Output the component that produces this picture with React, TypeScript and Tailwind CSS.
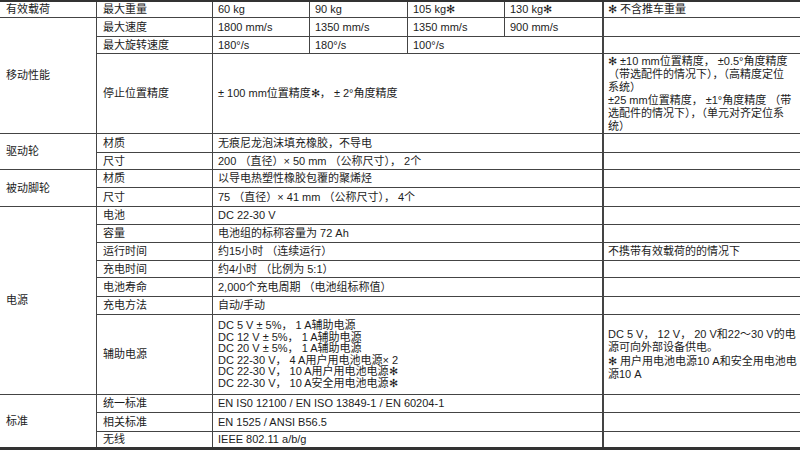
import React from "react";

const S = "✻";

type CellProps = {
  children?: React.ReactNode;
  className?: string;
};

function C({ children, className = "" }: CellProps) {
  return (
    <div className={`flex items-center px-[5px] border-[#444] overflow-visible whitespace-nowrap ${className}`}>
      {children}
    </div>
  );
}

function Lines({ lines, lh }: { lines: string[]; lh: string }) {
  return (
    <div className={`flex flex-col ${lh}`}>
      {lines.map((l, i) => (
        <span key={i} className="whitespace-nowrap">
          {l}
        </span>
      ))}
    </div>
  );
}

export default function App() {
  const b = "border-b";
  const r = "border-r";
  const r2 = "border-r-2";
  return (
    <div
      className="w-[800px] h-[451px] bg-white text-[#1c1c1c] text-[11px]"
      style={{ fontFamily: '"Liberation Sans", "Noto Sans CJK SC", sans-serif' }}
    >
      <div className="grid grid-cols-[97px_116px_97px_98px_97px_99px_196px] grid-rows-[16px_19px_17px_80px_19px_17px_18px_19px_18px_18px_18px_17px_19px_18px_80px_18px_19px_15px] border-t-2 border-b-[3px] border-[#333]">
        {/* Row 1 */}
        <C className={`${b} ${r} pl-[6px]`}>有效载荷</C>
        <C className={`${b} ${r} pl-[6px]`}>最大重量</C>
        <C className={`${b} ${r}`}>60 kg</C>
        <C className={`${b} ${r}`}>90 kg</C>
        <C className={`${b} ${r}`}>105 kg{S}</C>
        <C className={`${b} ${r2}`}>130 kg{S}</C>
        <C className={`${b} pl-[4px]`}>{S} 不含推车重量</C>

        {/* 移动性能 */}
        <C className={`row-span-3 ${b} ${r} pl-[6px]`}>移动性能</C>
        <C className={`${b} ${r} pl-[6px]`}>最大速度</C>
        <C className={`${b} ${r}`}>1800 mm/s</C>
        <C className={`${b} ${r}`}>1350 mm/s</C>
        <C className={`${b} ${r}`}>1350 mm/s</C>
        <C className={`${b} ${r2}`}>900 mm/s</C>
        <C className={`${b}`}></C>

        <C className={`${b} ${r} pl-[6px]`}>最大旋转速度</C>
        <C className={`${b} ${r}`}>180°/s</C>
        <C className={`${b} ${r}`}>180°/s</C>
        <C className={`col-span-2 ${b} ${r2}`}>100°/s</C>
        <C className={`${b}`}></C>

        <C className={`${b} ${r} pl-[6px]`}>停止位置精度</C>
        <C className={`col-span-4 ${b} ${r2}`}>± 100 mm位置精度{S}， ± 2°角度精度</C>
        <C className={`${b} pl-[4px]`}>
          <Lines
            lh="leading-[13px]"
            lines={[
              `${S} ±10 mm位置精度， ±0.5°角度精度`,
              "（带选配件的情况下），（高精度定位",
              "系统）",
              "±25 mm位置精度， ±1°角度精度 （带",
              "选配件的情况下），（单元对齐定位系",
              "统）",
            ]}
          />
        </C>

        {/* 驱动轮 */}
        <C className={`row-span-2 ${b} ${r} pl-[6px]`}>驱动轮</C>
        <C className={`${b} ${r} pl-[6px]`}>材质</C>
        <C className={`col-span-4 ${b} ${r2}`}>无痕尼龙泡沫填充橡胶，不导电</C>
        <C className={`${b}`}></C>
        <C className={`${b} ${r} pl-[6px]`}>尺寸</C>
        <C className={`col-span-4 ${b} ${r2}`}>200 （直径）× 50 mm （公称尺寸）， 2个</C>
        <C className={`${b}`}></C>

        {/* 被动脚轮 */}
        <C className={`row-span-2 ${b} ${r} pl-[6px]`}>被动脚轮</C>
        <C className={`${b} ${r} pl-[6px]`}>材质</C>
        <C className={`col-span-4 ${b} ${r2}`}>以导电热塑性橡胶包覆的聚烯烃</C>
        <C className={`${b}`}></C>
        <C className={`${b} ${r} pl-[6px]`}>尺寸</C>
        <C className={`col-span-4 ${b} ${r2}`}>75 （直径）× 41 mm （公称尺寸）， 4个</C>
        <C className={`${b}`}></C>

        {/* 电源 */}
        <C className={`row-span-7 ${b} ${r} pl-[6px]`}>电源</C>
        <C className={`${b} ${r} pl-[6px]`}>电池</C>
        <C className={`col-span-4 ${b} ${r2}`}>DC 22-30 V</C>
        <C className={`${b}`}></C>

        <C className={`${b} ${r} pl-[6px]`}>容量</C>
        <C className={`col-span-4 ${b} ${r2}`}>电池组的标称容量为 72 Ah</C>
        <C className={`${b}`}></C>

        <C className={`${b} ${r} pl-[6px]`}>运行时间</C>
        <C className={`col-span-4 ${b} ${r2}`}>约15小时 （连续运行）</C>
        <C className={`${b} pl-[4px]`}>不携带有效载荷的的情况下</C>

        <C className={`${b} ${r} pl-[6px]`}>充电时间</C>
        <C className={`col-span-4 ${b} ${r2}`}>约4小时 （比例为 5:1）</C>
        <C className={`${b}`}></C>

        <C className={`${b} ${r} pl-[6px]`}>电池寿命</C>
        <C className={`col-span-4 ${b} ${r2}`}>2,000个充电周期 （电池组标称值）</C>
        <C className={`${b}`}></C>

        <C className={`${b} ${r} pl-[6px]`}>充电方法</C>
        <C className={`col-span-4 ${b} ${r2}`}>自动/手动</C>
        <C className={`${b}`}></C>

        <C className={`${b} ${r} pl-[6px]`}>辅助电源</C>
        <C className={`col-span-4 ${b} ${r2}`}>
          <Lines
            lh="leading-[11.5px]"
            lines={[
              "DC 5 V ± 5%， 1 A辅助电源",
              "DC 12 V ± 5%， 1 A辅助电源",
              "DC 20 V ± 5%， 1 A辅助电源",
              "DC 22-30 V， 4 A用户用电池电源× 2",
              `DC 22-30 V， 10 A用户用电池电源${S}`,
              `DC 22-30 V， 10 A安全用电池电源${S}`,
            ]}
          />
        </C>
        <C className={`${b} pl-[4px]`}>
          <Lines
            lh="leading-[13.5px]"
            lines={[
              "DC 5 V， 12 V， 20 V和22～30 V的电",
              "源可向外部设备供电。",
              `${S} 用户用电池电源10 A和安全用电池电`,
              "源10 A",
            ]}
          />
        </C>

        {/* 标准 */}
        <C className={`row-span-3 ${r} pl-[6px]`}>标准</C>
        <C className={`${b} ${r} pl-[6px]`}>统一标准</C>
        <C className={`col-span-4 ${b} ${r2}`}>EN IS0 12100 / EN ISO 13849-1 / EN 60204-1</C>
        <C className={`${b}`}></C>

        <C className={`${b} ${r} pl-[6px]`}>相关标准</C>
        <C className={`col-span-4 ${b} ${r2}`}>EN 1525 / ANSI B56.5</C>
        <C className={`${b}`}></C>

        <C className={`${r} pl-[6px]`}>无线</C>
        <C className={`col-span-4 ${r2}`}>IEEE 802.11 a/b/g</C>
        <C></C>
      </div>
    </div>
  );
}
